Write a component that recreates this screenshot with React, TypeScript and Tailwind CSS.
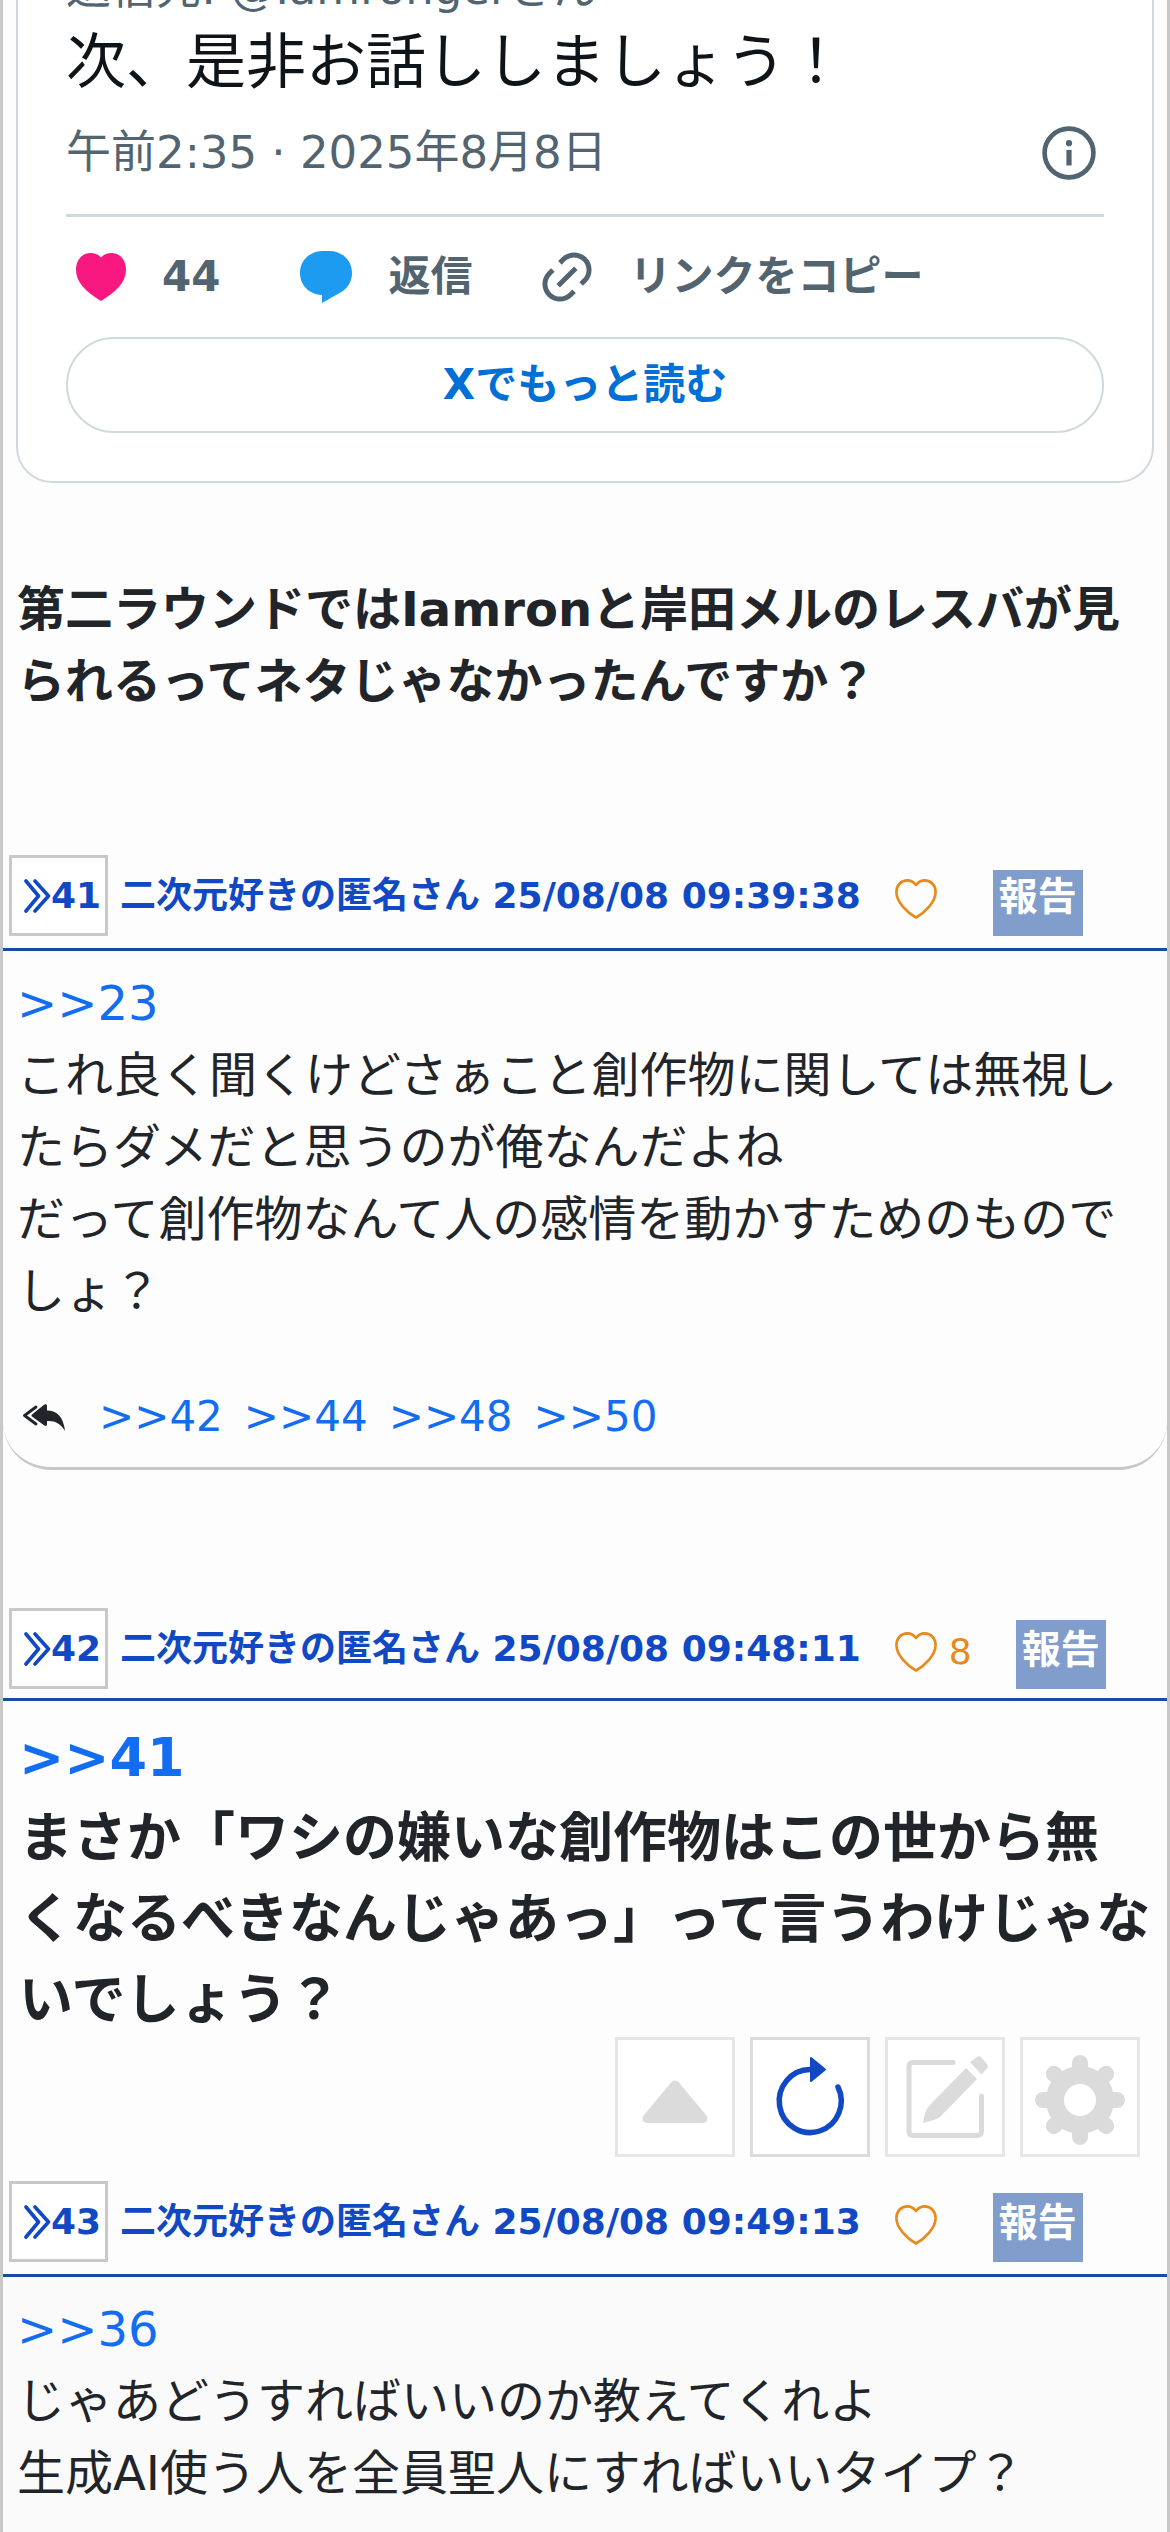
import React from "react";

function AngleDouble() {
  return (
    <svg viewBox="0 0 27 34" className="h-[34px] w-[27px] shrink-0" fill="none" stroke="currentColor" strokeWidth="3.600" strokeLinecap="round" strokeLinejoin="round" aria-hidden="true">
      <path d="M2 2 14.500 17 2 32M11 2 24.500 17 11 32" />
    </svg>
  );
}

function HeartOutline() {
  return (
    <svg viewBox="0 0 42 40" className="h-10 w-[42px] shrink-0" fill="none" stroke="currentColor" strokeWidth="2.600" strokeLinejoin="round" aria-hidden="true">
      <path d="M21 6C18.500 3 15.500 1.400 12.500 1.400C6 1.400 1.400 6.500 1.400 13C1.400 23 12 33.500 21 38.500C30 33.500 40.600 23 40.600 13C40.600 6.500 36 1.400 29.500 1.400C26.500 1.400 23.500 3 21 6Z" />
    </svg>
  );
}

type PostHeaderProps = { no: number; time: string; likes?: number; tight?: boolean; tall?: boolean };

function PostHeader({ no, time, likes, tight, tall }: PostHeaderProps) {
  return (
    <header className={`flex items-center border-b-[3px] border-[#174ba8] pl-1.5 text-4xl ${tight ? "pb-[9px]" : "pb-3"}`}>
      <button type="button" className="flex h-[81px] w-[99px] shrink-0 items-center border-[3px] border-[#c8c8c8] bg-white pl-3 font-bold text-[#1149c4]">
        <AngleDouble />
        {no}
      </button>
      <h2 className="ml-3 shrink-0 whitespace-nowrap font-bold text-[#1149c4]">二次元好きの匿名さん 25/08/08 {time}</h2>
      <button type="button" aria-label="いいね" className="ml-[34px] mt-1.5 flex shrink-0 items-center gap-3 text-[#e8891a]">
        <HeartOutline />
        {likes}
      </button>
      <button
        type="button"
        className={`w-[90px] shrink-0 self-end bg-[#809dcc] text-center text-[39px] font-bold text-white ${tall ? "h-[69px] pb-[9px] leading-[60px]" : "h-[66px] pb-3 leading-[54px]"} ${likes ? "ml-11" : "ml-14"}`}
      >
        報告
      </button>
    </header>
  );
}

function Anchor({ no }: { no: number }) {
  return (
    <a href={`#res${no}`} className="text-[#126df0]">
      &gt;&gt;{no}
    </a>
  );
}

function TweetCard() {
  return (
    <section className="mx-[13px] rounded-b-[36px] border-2 border-t-0 border-[#cfd9de] bg-white px-12 pb-12 text-[#536471]">
      <div className="flex h-4 items-end">
        <p className="text-[45px]/[54px]">返信先: @Iamrongerさん</p>
      </div>
      <p className="text-[60px]/[92px] text-[#0f1419]">次、是非お話ししましょう！</p>
      <div className="flex h-[90px] items-center justify-between pr-2">
        <p className="text-[45px]/[60px]">午前2:35 · 2025年8月8日</p>
        <button type="button" aria-label="情報">
          <svg viewBox="0 0 52 52" className="size-[54px]" fill="none" aria-hidden="true">
            <circle cx="26" cy="26" r="23.500" stroke="currentColor" strokeWidth="4.500" />
            <circle cx="26" cy="16.500" r="3" fill="currentColor" />
            <path d="M26 23v15" stroke="currentColor" strokeWidth="5" />
          </svg>
        </button>
      </div>
      <div className="mt-4 flex h-[123px] items-center border-t-[3px] border-[#cfd9de] pl-2.5 text-[42px] font-bold">
        <button type="button" className="flex items-center gap-9">
          <svg viewBox="0 0 50 48" className="h-12 w-[50px]" fill="#f91880" aria-hidden="true">
            <path d="M25 48C10 39 0 29 0 17C0 6.500 6.500 0 14.500 0C19 0 22.500 1.500 25 4.500C27.500 1.500 31 0 35.500 0C43.500 0 50 6.500 50 17C50 29 40 39 25 48Z" />
          </svg>
          44
        </button>
        <button type="button" className="ml-20 flex items-center gap-9">
          <svg viewBox="0 0 52 52" className="size-[52px]" fill="#1d9bf0" aria-hidden="true">
            <path d="M23 0H29C42.500 0 52 9.500 52 22C52 30 48.500 35.500 43 40L22 52V44C9 43.500 0 34 0 22C0 9.500 9.500 0 23 0Z" />
          </svg>
          返信
        </button>
        <button type="button" className="ml-[69px] flex items-center gap-9">
          <svg viewBox="1.600 1.600 20.800 20.800" className="size-[52px]" fill="currentColor" aria-hidden="true">
            <path d="M18.360 5.640c-1.950-1.960-5.110-1.960-7.070 0L9.880 7.050 8.460 5.640l1.420-1.420c2.730-2.730 7.160-2.730 9.900 0 2.730 2.740 2.730 7.170 0 9.900l-1.420 1.420-1.410-1.420 1.410-1.410c1.960-1.960 1.960-5.120 0-7.070zm-2.120 3.530l-7.070 7.070-1.410-1.410 7.070-7.070 1.410 1.410zm-12.020.710l1.420-1.420 1.410 1.420-1.410 1.410c-1.960 1.960-1.960 5.120 0 7.070 1.950 1.960 5.110 1.960 7.070 0l1.410-1.410 1.420 1.410-1.420 1.420c-2.730 2.730-7.160 2.730-9.900 0-2.730-2.740-2.730-7.170 0-9.900z" />
          </svg>
          リンクをコピー
        </button>
      </div>
      <a href="#more" className="flex h-24 items-center justify-center rounded-full border-2 border-[#cfd9de] text-[42px] font-bold text-[#006fd6]">
        Xでもっと読む
      </a>
    </section>
  );
}

function ReplyAll() {
  return (
    <svg viewBox="0 0 42 27" className="h-[27px] w-[42px] shrink-0" fill="#212529" aria-hidden="true">
      <path d="M13 3 1.500 11.500 13 20" fill="none" stroke="#212529" strokeWidth="2.800" strokeLinecap="round" strokeLinejoin="round" />
      <path d="M9 10.500 21 .8C22.800-.3 24 .3 24 2V6.500C34 6.500 40.500 13 42 27C37.500 19.500 32 16.500 24 17V20C24 22 22.800 22.500 21 21.300L9 12.500Q8 11.500 9 10.500Z" />
    </svg>
  );
}

const gearTeeth = [0, 45, 90, 135, 180, 225, 270, 315];

function Tool({ label, active, children }: { label: string; active?: boolean; children: React.ReactNode }) {
  return (
    <button type="button" aria-label={label} className={`size-[120px] border-[3px] bg-white ${active ? "border-[#dcdcdc] text-[#1149c4]" : "border-[#e6e6e6] text-[#dbdbdb]"}`}>
      <svg viewBox="0 0 114 114" className="size-full" fill="none" aria-hidden="true">
        {children}
      </svg>
    </button>
  );
}

export default function App() {
  return (
    <main className="relative h-screen overflow-hidden border-x-[3px] border-[#c8c8c8] bg-[#fdfdfd] font-['DejaVu_Sans','Noto_Sans_CJK_JP',sans-serif] text-5xl/[72px] text-[#212529]" lang="ja">
      <article>
        <TweetCard />
        <p className="px-3.5 pt-[90px] font-bold">第二ラウンドではIamronと岸田メルのレスバが見られるってネタじゃなかったんですか？</p>
      </article>

      <article className="mt-[138px] rounded-b-[48px] border-b-[3px] border-[#c8c8c8]">
        <PostHeader no={41} time="09:39:38" />
        <div className="px-3.5 pt-4">
          <p>
            <Anchor no={23} />
            <br />
            これ良く聞くけどさぁこと創作物に関しては無視したらダメだと思うのが俺なんだよね
            <br />
            だって創作物なんて人の感情を動かすためのものでしょ？
          </p>
          <div className="flex items-center pb-4 pl-1.5 pt-14 text-[42px]/[68px]">
            <ReplyAll />
            <nav className="ml-[34px] flex gap-[21px]">
              <Anchor no={42} />
              <Anchor no={44} />
              <Anchor no={48} />
              <Anchor no={50} />
            </nav>
          </div>
        </div>
      </article>

      <article className="mt-[138px]">
        <PostHeader no={42} time="09:48:11" likes={8} tight tall />
        <p className="pl-4 pt-4 text-[54px]/[81px] font-bold">
          <Anchor no={41} />
          <br />
          まさか「ワシの嫌いな創作物はこの世から無
          <br />
          くなるべきなんじゃあっ」って言うわけじゃな
          <br />
          いでしょう？
        </p>
      </article>

      <article className="mt-[140px]">
        <PostHeader no={43} time="09:49:13" tall />
        <p className="bg-[#fafafa] px-3.5 pb-10 pt-4">
          <Anchor no={36} />
          <br />
          じゃあどうすればいいのか教えてくれよ
          <br />
          生成AI使う人を全員聖人にすればいいタイプ？
        </p>
      </article>

      <nav className="fixed bottom-[375px] right-[30px] flex gap-[15px]">
        <Tool label="上へ">
          <path d="M57 45 85 78.500H29Z" fill="currentColor" stroke="currentColor" strokeWidth="9" strokeLinejoin="round" />
        </Tool>
        <Tool label="更新" active>
          <path d="M57 29.500A31 31.500 0 1 0 85 47" stroke="currentColor" strokeWidth="5.500" strokeLinecap="round" />
          <path d="M58 18 72 29.500 58 41Z" fill="currentColor" stroke="currentColor" strokeWidth="2" strokeLinejoin="round" />
        </Tool>
        <Tool label="書き込む">
          <path d="M65 22.500H25Q21 22.500 21 27V91Q21 95.500 25 95.500H89Q93.500 95.500 93.500 91V56" stroke="currentColor" strokeWidth="5" strokeLinecap="round" />
          <path d="M78 28 89 39 52 77Q48 80 35 83Q37 70 41 66ZM82 22 89 17Q91 15.500 93 17L99 24Q101 27 98.500 29L93.500 34.500Z" fill="currentColor" />
        </Tool>
        <Tool label="設定">
          <g stroke="currentColor">
            <circle cx="57" cy="60" r="25" strokeWidth="18" />
            {gearTeeth.map((a) => (
              <path key={a} d="M57 26V23" strokeWidth="16" strokeLinecap="round" transform={`rotate(${a} 57 60)`} />
            ))}
          </g>
        </Tool>
      </nav>
    </main>
  );
}
